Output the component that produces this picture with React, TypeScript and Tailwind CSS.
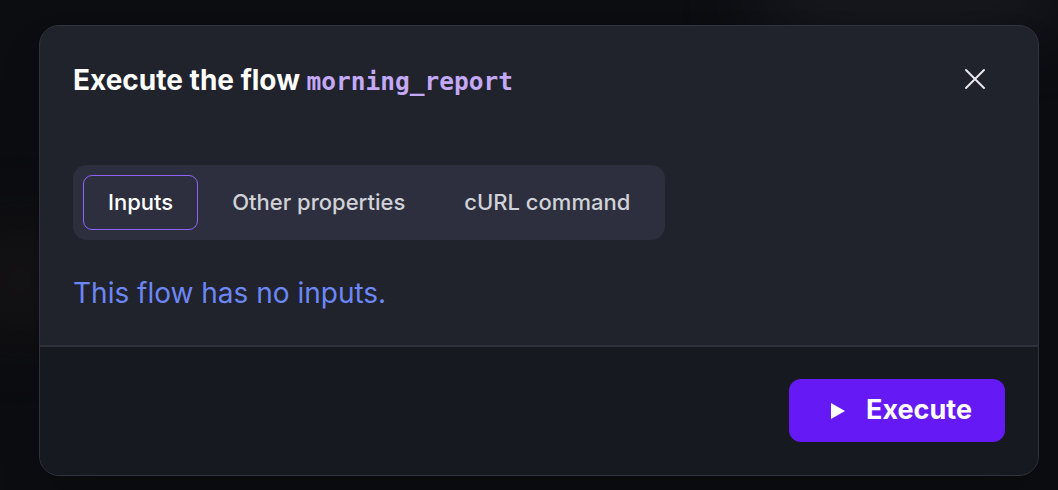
import React from 'react';

const tabs = ['Inputs', 'Other properties', 'cURL command'];

export default function App() {
  return (
    <div className="relative w-[1058px] h-[490px] overflow-hidden bg-[#0c0d11] font-['Inter',sans-serif]">
      <div className="absolute -top-10 right-0 w-[300px] h-[60px] rounded-full bg-[#2a2b33] blur-2xl opacity-60" />
      <div className="absolute top-[240px] -left-10 w-[120px] h-[80px] rounded-full bg-[#1f1a1a] blur-2xl opacity-70" />
      <div className="relative pt-[25px] pl-[39px]">
        <div className="w-[1000px] h-[451px] flex flex-col rounded-[20px] border border-[#30323f] bg-[#20222c] overflow-hidden shadow-2xl">
          <div className="px-[33px] pt-[36px] pb-[34px] border-b-2 border-[#2e303c]">
            <div className="flex items-start justify-between">
              <h2 className="text-[28px] leading-9 font-bold text-white">
                Execute the flow{' '}
                <span className="font-['DejaVu_Sans_Mono',monospace] text-[24.5px] text-[#c4a9f7]">morning_report</span>
              </h2>
              <button className="mt-[6px] mr-[19px] text-[#e8e9ee]">
                <svg width="22" height="22" viewBox="0 0 22 22" fill="none" stroke="currentColor" strokeWidth="2" strokeLinecap="round">
                  <path d="M2 2L20 20M20 2L2 20" />
                </svg>
              </button>
            </div>
            <div className="mt-[65px] inline-flex items-center gap-[9px] p-[10px] rounded-[14px] bg-[#2d2f3e]">
              {tabs.map((t, i) => (
                <div
                  key={t}
                  className={
                    i === 0
                      ? 'h-[55px] px-[24px] flex items-center rounded-[9px] border border-[#9163fa] text-white text-[22px] font-medium'
                      : 'h-[55px] px-[24px] flex items-center rounded-[9px] border border-transparent text-[#d0d2d8] text-[22px] font-medium'
                  }
                >
                  {t}
                </div>
              ))}
            </div>
            <p className="mt-[35px] text-[28px] leading-9 text-[#6c87f6]">This flow has no inputs.</p>
          </div>
          <div className="flex-1 bg-[#161920] flex items-start justify-end px-[33px] pt-[32px]">
            <button className="w-[216px] h-[63px] rounded-[12px] bg-[#6419f5] flex items-center pl-[41px] gap-[20px] text-white text-[27px] font-bold">
              <svg width="16" height="18" viewBox="0 0 16 18" fill="currentColor">
                <path d="M1 1L15 9L1 17Z" />
              </svg>
              <span>Execute</span>
            </button>
          </div>
        </div>
      </div>
    </div>
  );
}
